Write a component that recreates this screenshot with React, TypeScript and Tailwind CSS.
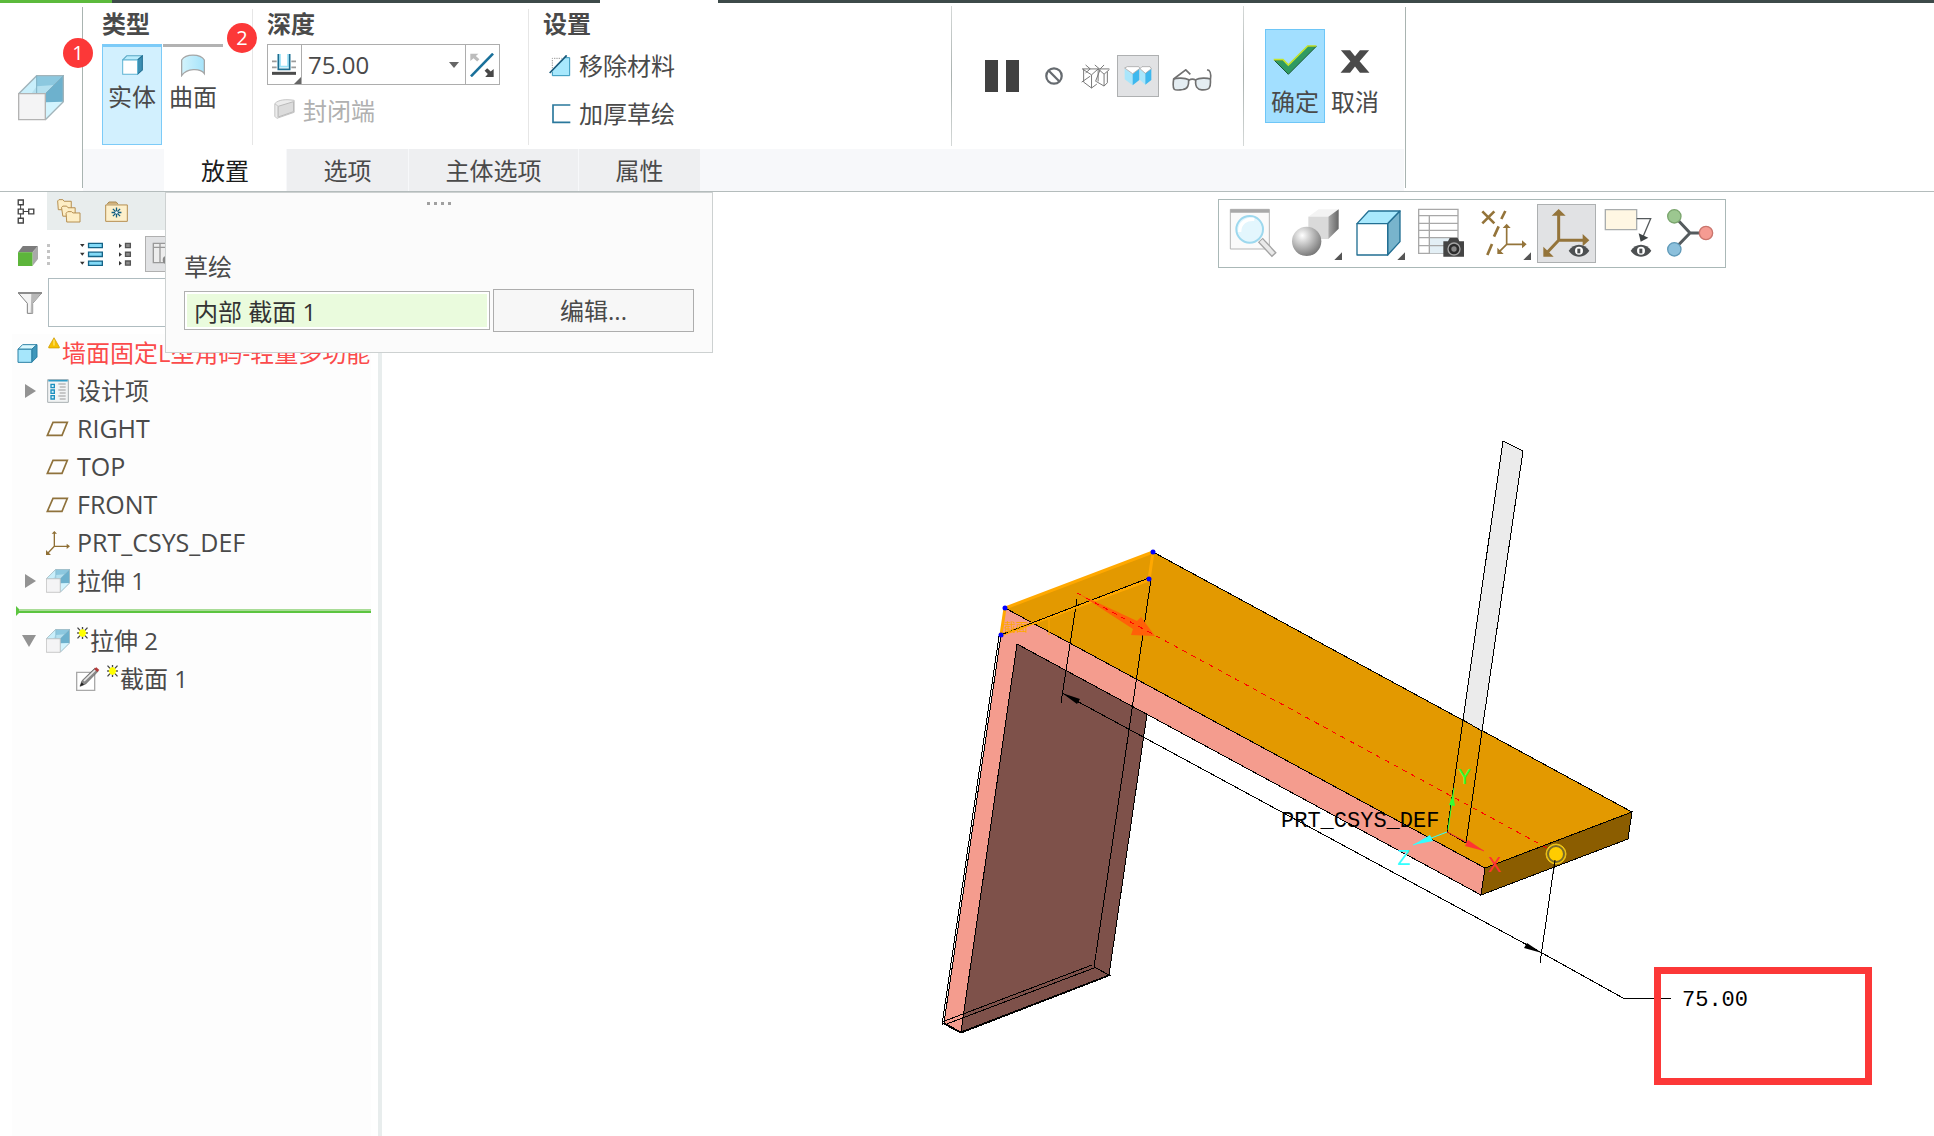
import React from 'react';

type IconProps = { className?: string };

/* ---------- Icons ---------- */

const ExtrudeIcon: React.FC<IconProps> = ({ className }) => (
  <svg viewBox="0 0 138 138" className={className} aria-hidden="true">
    <path d="M2 56 56 2h80L82 56z" fill="#8cc8df" />
    <path d="M2 56 56 2v54z" fill="#c9effb" />
    <path d="M56 34 110 30 82 56H40z" fill="#b4e0ef" />
    <path d="M82 56 136 2v78l-54 54z" fill="#6db1cd" />
    <path d="M82 82 136 80l-54 54z" fill="#d3f4fe" />
    <path d="M2 56 56 2h80v78l-54 54" fill="none" stroke="#a2b4ba" strokeWidth="4" />
    <path d="M82 56 136 2M56 2v52" fill="none" stroke="#7fb0c3" strokeWidth="3" />
    <path d="M2 56h80v78H2z" fill="#f4f4f5" stroke="#b3b3b3" strokeWidth="4" />
  </svg>
);

const SolidIcon: React.FC<IconProps> = ({ className }) => (
  <svg viewBox="0 0 62 58" className={className} aria-hidden="true">
    <path d="M2 14 14 2h46L46 14z" fill="#b9ecfc" stroke="#5aa7c4" strokeWidth="3" />
    <path d="M46 14 60 2v42L46 56z" fill="#3d8fb3" stroke="#1f6c8f" strokeWidth="3" />
    <path d="M2 14h44v42H2z" fill="#fff" stroke="#5fb4d4" strokeWidth="3" />
  </svg>
);

const SurfaceIcon: React.FC<IconProps> = ({ className }) => (
  <svg viewBox="0 0 74 70" className={className} aria-hidden="true">
    <defs>
      <linearGradient id="surface" x1="0" x2="1">
        <stop offset="0" stopColor="#d3f3fc" />
        <stop offset="1" stopColor="#a5e3fa" />
      </linearGradient>
    </defs>
    <path d="M2 18C14-2 60-2 72 18v42C58 42 18 44 2 66z" fill="url(#surface)" stroke="#a6a6a6" strokeWidth="4" />
  </svg>
);

const DepthIcon: React.FC<IconProps> = ({ className }) => (
  <svg viewBox="0 0 72 66" className={className} aria-hidden="true">
    <path d="M0 22h14M58 22h14M0 40h14M58 40h14" stroke="#9b9b9b" strokeWidth="5" />
    <path d="M24 0v38h24V0" fill="#fff" stroke="#9ae2f8" strokeWidth="5" />
    <path d="M19 0v46h34V0" fill="none" stroke="#1c6e91" strokeWidth="5" />
    <path d="M0 58h72" stroke="#4b4b4b" strokeWidth="9" />
  </svg>
);

const FlipIcon: React.FC<IconProps> = ({ className }) => (
  <svg viewBox="0 0 72 74" className={className} aria-hidden="true">
    <path d="M0 2h25l-8 7 11 10-7 7L10 16l-10 9z" fill="#bcbcbc" />
    <path d="M72 74H46l8-9-10-10 8-8 11 10 9-8z" fill="#484848" />
    <path d="M2 72 70 2" stroke="#19709a" strokeWidth="8" />
  </svg>
);

const CapIcon: React.FC<IconProps> = ({ className }) => (
  <svg viewBox="0 0 62 60" className={className} aria-hidden="true">
    <path d="M2 14C12 2 34 0 60 4v36L8 58l-6-6z" fill="#ececec" stroke="#c4c4c4" strokeWidth="3" />
    <path d="M12 22 58 8v30L12 54z" fill="#dcdcdc" stroke="#bbb" strokeWidth="3" />
    <path d="M2 14l10 8v32" fill="none" stroke="#c4c4c4" strokeWidth="3" />
  </svg>
);

const RemoveIcon: React.FC<IconProps> = ({ className }) => (
  <svg viewBox="0 0 66 66" className={className} aria-hidden="true">
    <path d="M10 40V10h28" fill="none" stroke="#999" strokeWidth="3" strokeDasharray="4 3" />
    <path d="M10 62V46L46 8h16v54z" fill="#a7e8fd" />
    <path d="M10 50v12h52V8H48" fill="none" stroke="#3195bb" strokeWidth="3" />
    <path d="M2 54 53 1" stroke="#17587a" strokeWidth="5" />
  </svg>
);

const ThickenIcon: React.FC<IconProps> = ({ className }) => (
  <svg viewBox="0 0 66 66" className={className} aria-hidden="true">
    <path d="M64 6H12v52h52" fill="none" stroke="#2a789c" strokeWidth="5" />
  </svg>
);

const NoPreviewIcon: React.FC<IconProps> = ({ className }) => (
  <svg viewBox="0 0 56 56" className={className} fill="none" stroke="#666b70" strokeWidth="7" aria-hidden="true">
    <circle cx="28" cy="28" r="24" />
    <path d="M11 11 45 45" />
  </svg>
);

const WireIcon: React.FC<IconProps> = ({ className }) => (
  <svg viewBox="0 0 88 74" className={className} fill="none" stroke="#777" strokeWidth="3" aria-hidden="true">
    <path d="M8 14v40l24 18 16-12M4 14l28 18v40M32 32l20-18v38M52 14l18 16v36M70 30l16-14M80 22v34L70 66 46 52M4 14h82M2 54l26-18M14 2l14 12M42 2l14 12M28 14 14 26M70 2 58 14M58 16 44 52" />
  </svg>
);

const ShadedIcon: React.FC<IconProps> = ({ className }) => (
  <svg viewBox="0 0 84 60" className={className} aria-hidden="true">
    <path d="M2 8v32l24 18V24zM48 10v32l16 14V22z" fill="#a9e6fb" />
    <path d="M26 24 46 8v34L26 58zM64 22 82 8v34L64 56z" fill="#3db8ee" />
    <path d="M2 6 10 2h34l4 5-22 16zM48 8l6-6h24l4 6-18 14z" fill="#fff" stroke="#999" strokeWidth="2" />
  </svg>
);

const GlassesIcon: React.FC<IconProps> = ({ className }) => (
  <svg viewBox="0 0 122 66" className={className} fill="none" stroke="#707070" strokeWidth="5" aria-hidden="true">
    <path d="M5 30c-6 42 6 34 28 32 16-2 18-14 18-30C40 26 14 26 5 30zM73 32c-4 20 4 30 18 31 24 1 28-6 26-33-10-4-34-4-44 2z" fill="#e4edf2" />
    <path d="M51 34c6-4 16-4 22 0M5 30 42 2l14 14M117 30c2-10 2-20-4-26l-6-2" />
  </svg>
);

const CheckIcon: React.FC<IconProps> = ({ className }) => (
  <svg viewBox="0 0 132 90" className={className} aria-hidden="true">
    <path d="M4 46h26l16 14L104 4h26L46 88z" fill="#2f9a61" stroke="#1d5a35" strokeWidth="3" />
    <path d="M2 44h28l16 16L104 3h26" fill="none" stroke="#c4e52c" strokeWidth="5" />
  </svg>
);

const CloseIcon: React.FC<IconProps> = ({ className }) => (
  <svg viewBox="0 0 90 70" className={className} aria-hidden="true">
    <path d="M2 1h28l15 18L60 1h28L59 34l30 35H60L45 50 30 69H1l30-35z" fill="#4a4a4a" />
  </svg>
);

const TreeIcon: React.FC<IconProps> = ({ className }) => (
  <svg viewBox="0 0 52 74" className={className} fill="none" stroke="#444" strokeWidth="4" aria-hidden="true">
    <path d="M3 3h15v14H3zM3 30h15v14H3zM3 57h15v14H3zM34 30h15v14H34z" />
    <path d="M10 17v13M10 44v13M18 37h16" strokeWidth="3" />
  </svg>
);

const FoldersIcon: React.FC<IconProps> = ({ className }) => (
  <svg viewBox="0 0 74 74" className={className} fill="#fdeec5" stroke="#b48d4e" strokeWidth="3" aria-hidden="true">
    <path d="M2 6l4-4h12l4 5h22v26H4z" />
    <path d="M14 26l4-4h12l4 5h22v26H18z" />
    <path d="M28 44l5-5h12l4 4h22v28H30z" />
  </svg>
);

const FavoriteIcon: React.FC<IconProps> = ({ className }) => (
  <svg viewBox="0 0 70 64" className={className} aria-hidden="true">
    <path d="M6 10 12 3h22l6 7" fill="#d3b37b" stroke="#a98a55" strokeWidth="3" />
    <path d="M2 12h66v50H2z" fill="#fdf0cb" stroke="#b48d4e" strokeWidth="3" />
    <path d="M35 20v30M20 35h30M24 24l22 22M46 24 24 46" stroke="#135e80" strokeWidth="4" />
    <circle cx="35" cy="35" r="4" fill="#fff" />
  </svg>
);

const ModelCubeIcon: React.FC<IconProps> = ({ className }) => (
  <svg viewBox="0 0 58 58" className={className} aria-hidden="true">
    <path d="M0 18 14 0h44L42 18z" fill="#7b7b7b" />
    <path d="M42 18 58 0v38L42 58z" fill="#a9a9a9" />
    <path d="M0 18h42v40H0z" fill="#5db53b" />
  </svg>
);

const ExpandIcon: React.FC<IconProps> = ({ className }) => (
  <svg viewBox="0 0 70 76" className={className} aria-hidden="true">
    <path d="M0 6h14l-7 9zM0 33h14l-7 9zM0 60h14l-7 9z" fill="#333" />
    <path d="M26 4h42v13H26zM26 31h42v13H26zM26 58h42v13H26z" fill="#83daf7" stroke="#146387" strokeWidth="4" />
  </svg>
);

const CollapseIcon: React.FC<IconProps> = ({ className }) => (
  <svg viewBox="0 0 40 76" className={className} aria-hidden="true">
    <path d="M0 4v14l9-7zM0 31v14l9-7zM0 58v14l9-7z" fill="#333" />
    <path d="M20 4h15v13H20zM20 31h15v13H20zM20 58h15v13H20z" fill="#8b8b8b" stroke="#555" strokeWidth="4" />
  </svg>
);

const ColumnsIcon: React.FC<IconProps> = ({ className }) => (
  <svg viewBox="0 0 72 72" className={className} aria-hidden="true">
    <path d="M4 4h60v58H4zM4 16h60M24 4v58M44 4v58" fill="#ededed" stroke="#999" strokeWidth="4" />
    <circle cx="44" cy="54" r="12" fill="#8a8a8a" />
  </svg>
);

const FilterIcon: React.FC<IconProps> = ({ className }) => (
  <svg viewBox="0 0 72 66" className={className} aria-hidden="true">
    <path d="M1 3h70L44 34v30H28V34z" fill="#f4f4f4" stroke="#808080" strokeWidth="3" />
    <path d="M40 3h31L44 34v30h-6z" fill="#b9b9b9" />
    <path d="M0 3h72" stroke="#8d8d8d" strokeWidth="6" />
  </svg>
);

const PartIcon: React.FC<IconProps> = ({ className }) => (
  <svg viewBox="0 0 62 58" className={className} aria-hidden="true">
    <path d="M2 16 16 2h44L44 16z" fill="#d9f8ff" stroke="#2a7fa3" strokeWidth="3" />
    <path d="M44 16 60 2v38L44 56z" fill="#3f97bb" stroke="#2a7fa3" strokeWidth="3" />
    <path d="M2 16h42v40H2z" fill="#a6e6fb" stroke="#2a7fa3" strokeWidth="3" />
  </svg>
);

const WarningIcon: React.FC<IconProps> = ({ className }) => (
  <svg viewBox="0 0 34 34" className={className} aria-hidden="true">
    <path d="M17 2 32 28v3H2v-3z" fill="#f6c000" stroke="#c99700" strokeWidth="2" />
    <path d="M17 8v16" stroke="#ffe26b" strokeWidth="4" />
  </svg>
);

const DesignIcon: React.FC<IconProps> = ({ className }) => (
  <svg viewBox="0 0 66 72" className={className} aria-hidden="true">
    <path d="M2 2h62v68H2z" fill="#f2f4f5" stroke="#a9b0b3" strokeWidth="3" />
    <path d="M4 5h58" stroke="#2f9cc6" strokeWidth="5" />
    <path d="M12 16h10v10H12zM12 33h10v10H12zM12 50h10v10H12z" fill="#d5f2fc" stroke="#1c8fbe" strokeWidth="4" />
    <path d="M34 15h22M38 24h18M34 33h22M38 42h18M34 51h22M38 60h18" stroke="#9a9a9a" strokeWidth="3" />
  </svg>
);

const PlaneIcon: React.FC<IconProps> = ({ className }) => (
  <svg viewBox="0 0 72 72" className={className} aria-hidden="true">
    <path d="M21 16h43L48 55H4z" fill="none" stroke="#8f723c" strokeWidth="5" />
  </svg>
);

const CsysIcon: React.FC<IconProps> = ({ className }) => (
  <svg viewBox="0 0 72 72" className={className} aria-hidden="true">
    <path d="M25 6v40h40M25 46 6 66" fill="none" stroke="#8f6f35" strokeWidth="4" />
    <path d="M17 8 25 0l8 8zM62 38l10 8-10 8zM0 57v15h15z" fill="#8f6f35" />
  </svg>
);

const SketchIcon: React.FC<IconProps> = ({ className }) => (
  <svg viewBox="0 0 72 72" className={className} aria-hidden="true">
    <path d="M2 16h54v54H2z" fill="#fff" stroke="#a9a9a9" strokeWidth="4" />
    <path d="M12 58l6-17L56 4l10 9-37 38z" fill="#8a8a8a" stroke="#555" strokeWidth="2" />
    <path d="M24 42 58 9" stroke="#e9e9e9" strokeWidth="5" />
    <path d="M54 6 61 1l9 8-6 6z" fill="#b33a3a" />
    <path d="M12 58l5-12 7 7z" fill="#222" />
  </svg>
);

const NewMarkIcon: React.FC<IconProps> = ({ className }) => (
  <svg viewBox="0 0 32 36" className={className} aria-hidden="true">
    <path d="M1 2 31 34M31 2 1 34M16 0v36M0 18h32" stroke="#444" strokeWidth="4" />
    <path d="M8 10h16v16H8z" fill="#ff0" />
    <path d="M16 6v24M5 18h22M8 10l16 16M24 10 8 26" stroke="#ff0" strokeWidth="6" />
  </svg>
);

/* ---------- View toolbar icons, all on a 171 x 177 grid ---------- */

const Eye: React.FC<{ x: number; y: number }> = ({ x, y }) => (
  <g transform={`translate(${x} ${y})`}>
    <path d="M-31 0C-16-24 16-24 31 0 16 24-16 24-31 0z" fill="#4d5052" />
    <circle r="12" fill="#fff" />
    <path d="M-5-6H4V8h-9z" fill="#4d5052" />
  </g>
);

const viewTools = [
  {
    label: '重新调整',
    art: (
      <>
        <path d="M22 16h117v119H22z" fill="#fafafa" stroke="#b5b5b5" strokeWidth="3" />
        <path d="M22 21h117" stroke="#a9a9a9" strokeWidth="11" />
        <path d="M112 108l42 45" stroke="#a3a3a3" strokeWidth="20" />
        <path d="M114 110l37 40" stroke="#e9e9e9" strokeWidth="12" />
        <circle cx="80" cy="76" r="40" fill="#e3f6fd" stroke="#9dd8ee" strokeWidth="6" />
        <path d="M50 84c0-28 20-40 44-38" fill="none" stroke="#fff" strokeWidth="10" />
      </>
    ),
  },
  {
    label: '渲染选项',
    menu: true,
    art: (
      <>
        <defs>
          <radialGradient id="ball" cx="0.35" cy="0.3" r="0.75">
            <stop offset="0" stopColor="#fff" />
            <stop offset="1" stopColor="#757575" />
          </radialGradient>
          <linearGradient id="side" x1="0" x2="1">
            <stop offset="0" stopColor="#aaa" />
            <stop offset="1" stopColor="#666" />
          </linearGradient>
        </defs>
        <path d="M67 38 98 16h60l-31 22z" fill="#f3f3f3" />
        <path d="M67 38h60v67H67z" fill="#dadada" />
        <path d="M127 38l31-22v58l-31 31z" fill="url(#side)" />
        <circle cx="62" cy="112" r="44" fill="url(#ball)" />
      </>
    ),
  },
  {
    label: '显示样式',
    menu: true,
    art: (
      <g stroke="#226f93" strokeWidth="4" strokeLinejoin="round">
        <path d="M24 59 59 21h94l-37 38z" fill="#a9e9fd" />
        <path d="M116 59l37-38v92l-37 40z" fill="#78b4cc" />
        <path d="M24 59h92v94H24z" fill="#fff" />
      </g>
    ),
  },
  {
    label: '已保存方向',
    art: (
      <>
        <path d="M20 16h118v132H20z" fill="#fff" stroke="#a8a8a8" strokeWidth="4" />
        <path d="M54 101h84v47H54z" fill="#e3eff5" />
        <path d="M20 35h118M20 58h118M20 79h118M20 101h118M20 125h118M52 35v113" stroke="#a8a8a8" strokeWidth="4" />
        <path d="M94 112h14l5-10h24l5 10h14v46H94z" fill="#444" />
        <circle cx="126" cy="135" r="18" fill="#2c2c2c" stroke="#a5a5a5" strokeWidth="4" />
        <circle cx="126" cy="135" r="8" fill="#888" />
      </>
    ),
  },
  {
    label: '基准显示',
    menu: true,
    art: (
      <>
        <g fill="none" stroke="#94743a">
          <path d="M22 22l36 36M58 22 22 58" strokeWidth="8" />
          <path d="M91 21 79 45M71 67 57 98M51 120l-14 33" strokeWidth="8" />
          <path d="M95 68v53h52M95 121l-22 22" strokeWidth="5" />
        </g>
        <path d="M83 72l12-13 12 13zM141 109l14 12-14 12zM67 131v19h19z" fill="#94743a" />
      </>
    ),
  },
  {
    label: '坐标系显示',
    active: true,
    art: (
      <>
        <path d="M62 26v83h80M62 109l-38 40" fill="none" stroke="#94743a" strokeWidth="9" />
        <path d="M41 35l21-20 21 20zM134 90l20 19-20 18zM16 128v30h31z" fill="#94743a" />
        <Eye x={123} y={140} />
      </>
    ),
  },
  {
    label: '注释显示',
    art: (
      <>
        <path d="M13 17h94v60H13z" fill="#fff7e3" stroke="#a9adad" strokeWidth="4" />
        <path d="M107 44h42l-22 52" fill="none" stroke="#555a5c" strokeWidth="4" />
        <path d="M113 88l29 13-23 12z" fill="#3d4244" />
        <Eye x={120} y={140} />
      </>
    ),
  },
  {
    label: '旋转中心',
    art: (
      <>
        <path d="M31 37l47 50-47 49M78 87h48" fill="none" stroke="#555b5e" strokeWidth="9" />
        <circle cx="31" cy="37" r="20" fill="#9cc790" stroke="#7aa56d" strokeWidth="4" />
        <circle cx="126" cy="87" r="20" fill="#f59b92" stroke="#c9756d" strokeWidth="4" />
        <circle cx="31" cy="136" r="20" fill="#8cc0dc" stroke="#5f99b8" strokeWidth="4" />
      </>
    ),
  },
];

/* ---------- Ribbon ---------- */

const Badge: React.FC<{ className: string; children: React.ReactNode }> = ({ className, children }) => (
  <span
    className={`absolute z-10 flex size-[30px] items-center justify-center rounded-full bg-[#fc3838] text-xl text-white ${className}`}
  >
    {children}
  </span>
);

const Group: React.FC<{ title: string; className: string; children: React.ReactNode }> = ({
  title,
  className,
  children,
}) => (
  <section className={`relative pt-1.5 ${className}`}>
    <h2 className="mb-[5px] text-2xl leading-[30px] font-bold">{title}</h2>
    {children}
    <span className="absolute top-1.5 right-0 bottom-1 w-px bg-[#e6e6e6]" />
  </section>
);

const tabs = [
  { label: '放置', width: 'w-[122px]', active: true },
  { label: '选项', width: 'w-[121px]' },
  { label: '主体选项', width: 'w-[169px]' },
  { label: '属性', width: 'w-[121px]' },
];

const PlacementPanel: React.FC = () => (
  <div className="absolute top-full left-[82px] z-20 mt-px h-[161px] w-[548px] border border-[#cdd1d1] bg-[#fbfbfb] px-[18px]">
    <div className="flex h-6 items-center justify-center gap-1 pb-1">
      <span className="size-[3px] bg-[#a0a0a0]" />
      <span className="size-[3px] bg-[#a0a0a0]" />
      <span className="size-[3px] bg-[#a0a0a0]" />
      <span className="size-[3px] bg-[#a0a0a0]" />
    </div>
    <label htmlFor="section" className="mt-8 block text-2xl leading-[36px]">
      草绘
    </label>
    <div className="mt-1 flex items-center gap-[3px]">
      <input
        id="section"
        defaultValue="内部 截面 1"
        className="h-[39px] w-[306px] border border-[#b0b0b0] bg-[#eafbdd] px-[9px] text-2xl text-[#333] ring-2 ring-white ring-inset outline-none"
      />
      <button type="button" className="h-[43px] w-[201px] border border-[#adadad] bg-[#f7f7f7] text-2xl">
        编辑...
      </button>
    </div>
  </div>
);

const VLine: React.FC = () => (
  <span className="my-[3px] w-px bg-linear-to-b from-[#d5d9d8] via-[#a9b1af] to-[#d5d9d8]" />
);

const Ribbon: React.FC = () => (
  <header className="relative flex border-b border-[#b4bcbc]">
    <button type="button" aria-label="拉伸" className="relative mt-1 mb-[3px] w-[83px] border-r border-[#a9b4b1] pl-[18px]">
      <ExtrudeIcon className="size-[46px]" />
      <Badge className="top-[31px] left-[63px]">1</Badge>
    </button>

    <div className="relative mr-px">
      <div className="flex h-[146px]">
        <Group title="类型" className="w-[170px] pl-[19px]">
          <div className="flex h-[101px] gap-px">
            <button
              type="button"
              aria-pressed="true"
              className="flex w-[60px] flex-col items-center border border-t-3 border-[#7ccbf8] bg-[#d2f0fe] pt-2 text-2xl leading-[36px]"
            >
              <SolidIcon className="mb-1 h-5 w-[21px]" />
              实体
            </button>
            <button
              type="button"
              className="flex w-[60px] flex-col items-center border-t-3 border-[#b2b2b2] pt-[7px] text-2xl leading-[36px]"
            >
              <SurfaceIcon className="mb-0.5 h-[23px] w-6" />
              曲面
            </button>
          </div>
          <Badge className="top-5 right-[-4px]">2</Badge>
        </Group>

        <Group title="深度" className="w-[276px] pl-[14px]">
          <div className="flex h-[41px] w-[233px] border border-[#adadad]">
            <button type="button" aria-label="深度选项" className="relative w-[34px] border-r border-[#adadad] pl-1">
              <DepthIcon className="h-[22px] w-6" />
              <svg viewBox="0 0 8 8" className="absolute right-0 bottom-0 size-[7px]" aria-hidden="true">
                <path d="M8 0v8H0z" fill="#666" />
              </svg>
            </button>
            <input aria-label="深度" defaultValue="75.00" className="w-[140px] pl-[6px] text-2xl outline-none" />
            <button type="button" aria-label="最近使用的值" className="flex w-[23px] items-center justify-center">
              <svg viewBox="0 0 10 6" className="h-1.5 w-2.5" aria-hidden="true">
                <path d="M0 0h10L5 6z" fill="#666" />
              </svg>
            </button>
            <button type="button" aria-label="反向" className="w-[34px] border-l border-[#adadad] pl-1">
              <FlipIcon className="size-6" />
            </button>
          </div>
          <button type="button" disabled className="mt-2 flex items-center gap-2 pl-[7px] text-2xl leading-[36px] text-[#b0b0b0]">
            <CapIcon className="mb-1 h-5 w-[21px]" />
            封闭端
          </button>
        </Group>

        <section className="w-[422px] pt-1.5 pl-[14px]">
          <h2 className="mb-2 text-2xl leading-[30px] font-bold">设置</h2>
          <button type="button" className="flex h-[38px] items-center gap-2 pl-[6px] text-2xl">
            <RemoveIcon className="size-[22px]" />
            移除材料
          </button>
          <button type="button" className="mt-[10px] flex h-[38px] items-center gap-2 pl-[6px] text-2xl">
            <ThickenIcon className="size-[22px]" />
            加厚草绘
          </button>
        </section>

        <VLine />
        <div className="flex w-[291px] items-center pl-[33px]">
          <button type="button" aria-label="暂停" className="flex gap-2">
            <span className="h-8 w-[13px] bg-[#414141]" />
            <span className="h-8 w-[13px] bg-[#414141]" />
          </button>
          <button type="button" aria-label="无预览" className="ml-[26px]">
            <NoPreviewIcon className="size-[18px]" />
          </button>
          <button type="button" aria-label="未附加预览" className="ml-[18px]">
            <WireIcon className="h-[25px] w-[29px]" />
          </button>
          <button
            type="button"
            aria-label="附加预览"
            aria-pressed="true"
            className="ml-[7px] flex size-[42px] items-center justify-center border border-[#aeb0b1] bg-[#e1e2e4]"
          >
            <ShadedIcon className="h-5 w-7" />
          </button>
          <button type="button" aria-label="特征预览" className="ml-[13px] pt-2">
            <GlassesIcon className="h-[22px] w-10" />
          </button>
        </div>
        <VLine />

        <div className="flex w-[160px] items-start pt-[26px] pl-[21px]">
          <button
            type="button"
            className="flex h-[94px] w-[60px] flex-col items-center border border-[#6ec6f7] bg-[#a2dfff] pt-[15px] text-2xl leading-[36px]"
          >
            <CheckIcon className="mb-[9px] h-[30px] w-11" />
            确定
          </button>
          <button type="button" className="flex h-[94px] w-[60px] flex-col items-center pt-[21px] text-2xl leading-[36px]">
            <CloseIcon className="mb-[11px] h-[23px] w-[30px]" />
            取消
          </button>
        </div>
      </div>

      <nav className="flex h-[42px] gap-px bg-[#f7f8fa] pl-[81px]">
        {tabs.map((tab) => (
          <button
            key={tab.label}
            type="button"
            className={`pt-0.5 text-2xl ${tab.width} ${
              tab.active ? 'bg-white text-[#1c1c1c]' : 'bg-[#eeeff1]'
            }`}
          >
            {tab.label}
          </button>
        ))}
      </nav>
      <PlacementPanel />
    </div>
    <span className="mt-1 mb-[3px] w-px bg-[#a9b4b1]" />
  </header>
);

/* ---------- Model tree ---------- */

type Node = {
  label: string;
  icon: React.FC<IconProps>;
  arrow?: 'right' | 'down';
  datum?: boolean;
  fresh?: boolean;
  child?: boolean;
};

const nodes: Node[] = [
  { label: '设计项', icon: DesignIcon, arrow: 'right' },
  { label: 'RIGHT', icon: PlaneIcon, datum: true },
  { label: 'TOP', icon: PlaneIcon, datum: true },
  { label: 'FRONT', icon: PlaneIcon, datum: true },
  { label: 'PRT_CSYS_DEF', icon: CsysIcon, datum: true },
  { label: '拉伸 1', icon: ExtrudeIcon, arrow: 'right' },
];

const pending: Node[] = [
  { label: '拉伸 2', icon: ExtrudeIcon, arrow: 'down', fresh: true },
  { label: '截面 1', icon: SketchIcon, fresh: true, child: true },
];

const TreeRow: React.FC<{ node: Node }> = ({ node }) => (
  <li className={`flex h-[38px] items-center ${node.child ? 'pl-[30px]' : ''} ${node.datum ? 'text-[25px]' : ''}`}>
    <span className="flex w-[34px] justify-center">
      {node.arrow && (
        <svg viewBox="0 0 14 14" className="size-3.5" aria-hidden="true">
          <path d={node.arrow === 'right' ? 'M3 0v14l11-7z' : 'M0 1h14L7 13z'} fill="#939393" />
        </svg>
      )}
    </span>
    <node.icon className="size-6" />
    {node.fresh && <NewMarkIcon className="mb-4 ml-[7px] h-3 w-[11px]" />}
    <span className={node.fresh ? 'ml-0.5' : 'ml-[7px]'}>{node.label}</span>
  </li>
);

const Sidebar: React.FC = () => (
  <aside className="flex w-[382px] shrink-0 flex-col border-r-4 border-[#e8eded]">
    <div className="flex h-[38px]">
      <button type="button" aria-label="模型树" className="w-[47px] pl-[17px]">
        <TreeIcon className="h-[25px] w-[18px]" />
      </button>
      <div className="flex flex-1 items-center gap-6 bg-[#e8eded] pl-[10px]">
        <button type="button" aria-label="文件夹浏览器">
          <FoldersIcon className="size-6" />
        </button>
        <button type="button" aria-label="收藏夹">
          <FavoriteIcon className="h-[21px] w-[23px]" />
        </button>
      </div>
    </div>

    <div className="flex h-12 items-center pl-[18px]">
      <button type="button" aria-label="模型">
        <ModelCubeIcon className="mt-1 size-5" />
      </button>
      <span className="ml-[9px] flex flex-col gap-[3px]">
        <span className="size-[3px] bg-[#c4c4c4]" />
        <span className="size-[3px] bg-[#c4c4c4]" />
        <span className="size-[3px] bg-[#c4c4c4]" />
        <span className="size-[3px] bg-[#c4c4c4]" />
      </span>
      <button type="button" aria-label="全部展开" className="ml-[30px]">
        <ExpandIcon className="h-[25px] w-[23px]" />
      </button>
      <button type="button" aria-label="全部折叠" className="ml-4">
        <CollapseIcon className="h-[25px] w-[13px]" />
      </button>
      <button type="button" aria-label="树列" className="ml-[13px] size-9 border border-[#b0b0b0] bg-[#e1e2e4] pl-1.5">
        <ColumnsIcon className="size-6" />
      </button>
    </div>

    <div className="flex h-[49px] items-center gap-[6px] pl-[18px]">
      <FilterIcon className="h-[22px] w-6" />
      <input aria-label="过滤" className="h-full flex-1 border border-[#afbcc0] px-2 text-2xl outline-none" />
    </div>

    <div className="mt-[7px] mr-[7px] ml-3 flex-1 bg-[#fdfdfd] text-2xl">
      <div className="flex h-[38px] items-center pl-[5px] whitespace-nowrap text-[#fb4b4b]">
        <PartIcon className="h-[19px] w-[21px]" />
        <WarningIcon className="mb-5 ml-[10px] size-3" />
        <span className="ml-0.5">墙面固定L型角码-轻量多功能</span>
      </div>
      <ul>
        {nodes.map((node) => (
          <TreeRow key={node.label} node={node} />
        ))}
      </ul>
      <div className="mt-1.5 mb-1.5 ml-1 flex h-2.5 items-center">
        <svg viewBox="0 0 3 10" className="h-2.5 w-[3px]" aria-hidden="true">
          <path d="M0 0l3 3v4l-3 3z" fill="#5cc540" />
        </svg>
        <span className="h-1 flex-1 border-t-2 border-[#a9dc97] bg-[#5cc540]" />
      </div>
      <ul>
        {pending.map((node) => (
          <TreeRow key={node.label} node={node} />
        ))}
      </ul>
    </div>
  </aside>
);

/* ---------- Graphics area ---------- */

const ViewToolbar: React.FC = () => (
  <div className="absolute top-[7px] left-[836px] flex items-center gap-1 border border-[#aab8b7] bg-white px-[3px] py-1">
    {viewTools.map((tool) => (
      <button
        key={tool.label}
        type="button"
        aria-label={tool.label}
        className={`size-[59px] ${tool.active ? 'bg-[#e1e2e4] outline outline-[#adb0b1] -outline-offset-1' : ''}`}
      >
        <svg viewBox="0 0 171 177" className="h-full w-full" aria-hidden="true">
          {tool.art}
          {tool.menu && <path d="M168 145v23h-23z" fill="#555" />}
        </svg>
      </button>
    ))}
  </div>
);

const Model: React.FC = () => (
  <svg viewBox="382 192 1552 944" className="block h-auto w-full" role="img" aria-label="拉伸预览">
    {/* Faces */}
    <g shapeRendering="crispEdges" stroke="#000" strokeWidth="1">
      <path d="M1017 644 1147 714 1109 975 961 1032z" fill="#7e514a" />
      <path d="M1005 608 1153 552 1632 812 1485 868z" fill="#e39900" />
      <path d="M1005 608 1485 868 1481 895 1017 644 961 1032 944 1023 1001 635z" fill="#f49c8e" />
      <path d="M1485 868 1632 812 1628 839 1481 895z" fill="#8b5d00" />
      <path d="M1503 441 1523 451 1482 731 1463 720z" fill="#ebebeb" />
    </g>

    {/* Hidden and sketch edges */}
    <g shapeRendering="crispEdges" fill="none" stroke="#000" strokeWidth="1">
      <path d="M1463 720 1447 832 1466 843 1482 731" />
      <path d="M1151 579 1129 730 1107 880 1094 967 1109 975" />
      <path d="M1092 965 942 1022M1094 968 944 1025M1111 975 961 1033 942 1023M999 636 942 1025" />
      <path d="M1077 599 1061 703M1555 860 1540 963" />
      <path d="M1062 693 1542 953 1623 998H1671" />
    </g>

    {/* Highlighted section */}
    <path d="M1153 552 1005 608 1001 635 1149 580z" fill="none" stroke="#ffa800" strokeWidth="3" />
    <path d="M1149 578 1003 634" stroke="#000" strokeWidth="1" shapeRendering="crispEdges" />
    <text x="1004" y="632" fontSize="12" fill="#ffa800">
      截面
    </text>
    <path d="M1049 618v17" stroke="#ffa800" strokeWidth="1" />
    <g fill="#00f">
      <circle cx="1153" cy="552" r="2.5" />
      <circle cx="1149" cy="579" r="2.5" />
      <circle cx="1005" cy="608" r="2.5" />
      <circle cx="1001" cy="635" r="2.5" />
    </g>

    {/* Direction arrow */}
    <path d="M1079 594 1137 621 1141 617 1155 636 1131 635 1133 629z" fill="#ff6008" />
    <path d="M1077 593 1547 848" stroke="#f00" strokeWidth="1" strokeDasharray="5 5" shapeRendering="crispEdges" />

    {/* Dimension arrows */}
    <path d="M1062 693 1080 699 1077 704zM1542 953 1527 943 1524 948z" fill="#000" />

    {/* Coordinate system */}
    <g strokeWidth="1" fontFamily="'Liberation Mono', monospace" fontSize="22">
      <path d="M1448 830 1454 788" stroke="#33ff33" />
      <path d="M1453 794 1455 806 1449 805z" fill="#33ff33" />
      <text x="1458" y="784" fill="#33ff33">
        Y
      </text>
      <path d="M1447 832 1484 851" stroke="#ff3333" />
      <path d="M1484 851 1468 840 1465 846z" fill="#ff3333" />
      <text x="1488" y="872" fill="#ff3333">
        X
      </text>
      <path d="M1447 832 1413 845" stroke="#33ffff" />
      <path d="M1413 845 1430 835 1433 841z" fill="#33ffff" />
      <text x="1397" y="865" fill="#33ffff">
        Z
      </text>
      <text x="1281" y="827" fill="#000">
        PRT_CSYS_DEF
      </text>
      <text x="1682" y="1006" fill="#000">
        75.00
      </text>
    </g>

    {/* Drag handle */}
    <circle cx="1556" cy="854" r="10" fill="#ffcc00" stroke="#e8c020" strokeWidth="1" />
    <circle cx="1556" cy="854" r="8" fill="none" stroke="#7a6a2a" strokeWidth="2" />
    <path d="M1555 860l-2 14" stroke="#000" />

    <path d="M1657.5 970.5h211v111h-211z" fill="none" stroke="#fc3838" strokeWidth="7" />
  </svg>
);

const App: React.FC = () => {
  return (
    <div className="flex min-h-screen flex-col bg-white font-['Open_Sans','Noto_Sans_CJK_SC',sans-serif] text-[#4a4a4a]">
      <div className="flex h-[3px]">
        <span className="w-28 bg-[#5cba3c]" />
        <span className="w-[488px] bg-[#3d4a49]" />
        <span className="w-[118px]" />
        <span className="flex-1 bg-[#3d4a49]" />
      </div>
      <Ribbon />
      <div className="flex flex-1">
        <Sidebar />
        <main className="relative min-w-0 flex-1">
          <Model />
          <ViewToolbar />
        </main>
      </div>
    </div>
  );
};

export default App;
